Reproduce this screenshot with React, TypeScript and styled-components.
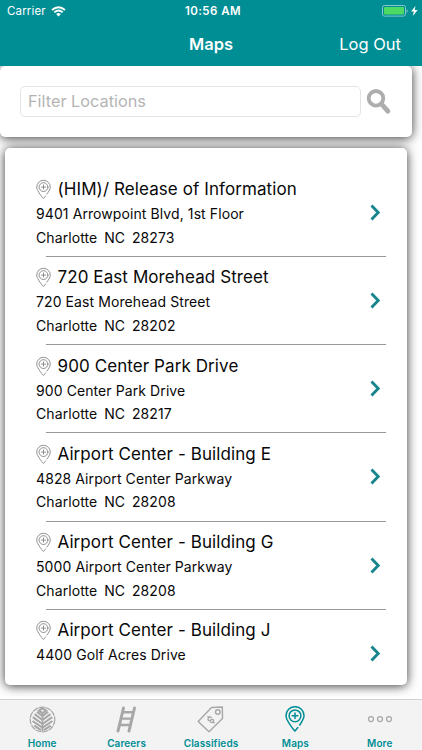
import React from "react";
import styled, { createGlobalStyle } from "styled-components";

const TEAL = "#008e95";
const GREY = "#a7a7a7";

const GlobalStyle = createGlobalStyle`
  * { box-sizing: border-box; }
  body { margin: 0; background: #fff; font-family: Inter, "Liberation Sans", sans-serif; }
`;

const Screen = styled.div`
  width: 422px;
  height: 750px;
  display: flex;
  flex-direction: column;
  overflow: hidden;
  background: #fff;
`;

const Header = styled.header`
  height: 66px;
  flex: none;
  position: relative;
  z-index: 1;
  background: ${TEAL};
  color: #fff;
`;

const StatusBar = styled.div`
  height: 22px;
  display: grid;
  grid-template-columns: 1fr auto 1fr;
  align-items: center;
  padding: 0 4px 0 7px;
  font-size: 11.5px;
  line-height: 22px;
`;

const Carrier = styled.div`
  display: flex;
  align-items: center;
  gap: 5px;
  letter-spacing: 0.15px;
`;

const Clock = styled.div`
  margin-left: 1px;
  font-weight: 600;
  letter-spacing: 0.45px;
`;

const Power = styled.div`
  display: flex;
  justify-content: flex-end;
  align-items: center;
  gap: 3px;
`;

const NavBar = styled.div`
  height: 44px;
  display: grid;
  grid-template-columns: 1fr auto 1fr;
  align-items: center;
  padding: 0 21px;
`;

const NavTitle = styled.h1`
  grid-column: 2;
  margin: 0;
  font-size: 16.5px;
  font-weight: 600;
  line-height: 24px;
`;

const NavAction = styled.button`
  justify-self: end;
  border: 0;
  padding: 0;
  background: none;
  color: #fff;
  font: 400 16.5px/24px Inter, sans-serif;
`;

const Content = styled.main`
  flex: 1;
  min-height: 0;
  display: flex;
  flex-direction: column;
  gap: 11px;
`;

const Card = styled.section`
  background: #fff;
  border-radius: 5px;
  box-shadow: 0 1px 11px rgba(0, 0, 0, 0.8);
`;

const SearchCard = styled(Card)`
  width: 411.5px;
  height: 71px;
  flex: none;
  display: flex;
  align-items: center;
  gap: 5px;
  padding: 0 0 1px 20px;
`;

const SearchInput = styled.input`
  width: 341px;
  height: 31px;
  border: 1px solid #e4e4e4;
  border-radius: 5px;
  padding: 0 7px;
  background: #fff;
  font: 400 16.3px/22px Inter, sans-serif;
  outline: 0;
  &::placeholder { color: #b4b4b4; opacity: 1; }
`;

const ListCard = styled(Card)`
  width: 401.5px;
  height: 536.5px;
  flex: none;
  margin-left: 5px;
  padding: 20.8px 20.5px 0 31px;
  overflow: hidden;
`;

const Row = styled.article`
  height: 88.2px;
  display: flex;
  flex-direction: column;
`;

const RowBody = styled.div`
  height: 87.2px;
  display: flex;
  align-items: center;
  justify-content: space-between;
  padding-right: 5px;
`;

const Details = styled.div`
  height: 87.2px;
  padding-top: 8.4px;
  color: #080808;
  white-space: pre;
`;

const Name = styled.h2`
  margin: 0;
  height: 25px;
  display: flex;
  align-items: center;
  gap: 6.5px;
  font-size: 17px;
  font-weight: 400;
  line-height: 25px;
  letter-spacing: 0.09px;
`;

const Line = styled.p<{ $tight?: boolean }>`
  margin: 0;
  font-size: 14px;
  line-height: 23.6px;
  letter-spacing: 0.09px;
  word-spacing: ${(p) => (p.$tight ? "-0.6px" : "0")};
`;

const Divider = styled.div`
  height: 1px;
  margin-left: 10px;
  background: #999;
`;

const TabBar = styled.nav`
  height: 51px;
  flex: none;
  position: relative;
  display: grid;
  grid-template-columns: repeat(5, 1fr);
  background: #f3f3f3;
  border-top: 1px solid #d2d2d2;
`;

const Tab = styled.a`
  display: flex;
  flex-direction: column;
  align-items: center;
  color: ${TEAL};
  font-size: 10px;
  font-weight: 600;
  line-height: 14px;
  letter-spacing: 0.1px;
`;

const TabIcon = styled.div<{ $active?: boolean }>`
  height: 36px;
  display: flex;
  align-items: center;
  padding-top: 2px;
  color: ${(p) => (p.$active ? TEAL : GREY)};
`;

const WifiIcon = () => (
  <svg width="15" height="11" viewBox="0 0 15 11" fill="none" stroke="#fff" strokeWidth="1.9">
    <path d="M1 4Q7.5-1.6 14 4M3.3 6.4Q7.5 2.8 11.7 6.4" />
    <path d="M5.1 8Q7.5 6 9.9 8L7.5 10.4Z" fill="#fff" stroke="none" />
  </svg>
);

const BatteryIcon = () => (
  <svg width="26" height="12" viewBox="0 0 26 12">
    <rect x=".5" y=".5" width="23" height="10.6" rx="2" fill="none" stroke="#83c8cc" />
    <rect x="2" y="2" width="20" height="7.6" rx="1" fill="#4cd964" />
    <path d="M24.7 4v4q1-.6 1-2t-1-2" fill="#83c8cc" />
  </svg>
);

const BoltIcon = () => (
  <svg width="7" height="10" viewBox="0 0 7 10">
    <path d="M4.5 0L0 5.6h2.8L1.8 10 6.7 4H3.8Z" fill="#fff" />
  </svg>
);

const SearchIcon = () => (
  <svg width="25" height="27" viewBox="0 0 25 27" fill="none" stroke="#adadad">
    <circle cx="10" cy="10.3" r="7.3" strokeWidth="3.8" />
    <path d="M15.5 16L21.8 23.2" strokeWidth="4.8" strokeLinecap="round" />
  </svg>
);

const PinIcon = ({ width, height, weight }: { width: number; height: number; weight: number }) => (
  <svg width={width} height={height} viewBox="0 0 20 26" fill="none" stroke="currentColor" strokeWidth={weight} strokeLinecap="round" strokeLinejoin="round">
    <path d="M12.8 21.6L10 25Q8.5 24.2 3.7 16.7C1.7 13.6 1 12 1 9.7A9 9 0 0 1 19 9.7C19 12.7 17.2 15.2 14.7 19" />
    <circle cx="10" cy="9.8" r="5.9" />
    <path d="M10 7v5.6M7.2 9.8h5.6" />
  </svg>
);

const RowPin = styled.span`
  display: flex;
  width: 15px;
  color: #858585;
`;

const ChevronIcon = () => (
  <svg width="11" height="17" viewBox="0 0 11 17" fill="none" stroke="#16858d" strokeWidth="2.9">
    <path d="M1.5 1.6L8.2 8.5L1.5 15.4" />
  </svg>
);

const TreeIcon = () => (
  <svg width="27" height="27" viewBox="0 0 27 27" fill="none" stroke="currentColor">
    <circle cx="13.5" cy="13.5" r="12.3" strokeWidth="1.2" strokeDasharray="6 .7" />
    <path d="M13.5 7v18.5" strokeWidth="1.7" />
    <path d="M10 4.6L13.5 2.2L17 4.6L13.5 7ZM13.5 10L8 5.8M13.5 10L19 5.8M13.5 14L5.6 8.2M13.5 14L21.4 8.2M13.5 18L3.8 11.2M13.5 18L23.2 11.2M13.5 21.7L3.5 15M13.5 21.7L23.5 15M12 24.2L5.3 19.6M15 24.2L21.7 19.6" strokeWidth="2.1" />
  </svg>
);

const LadderIcon = () => (
  <svg width="21" height="27" viewBox="0 0 21 27" fill="none" stroke="currentColor" strokeLinecap="round">
    <path d="M7.5 2L2 25M18.5 2L13 25" strokeWidth="3" />
    <path d="M6.8 6.2H17M5.5 12.6H15.5M4 19H14" strokeWidth="2.4" />
  </svg>
);

const TagIcon = () => (
  <svg width="27" height="27" viewBox="0 0 27 27" fill="none" stroke="currentColor" strokeWidth="1.4" strokeLinejoin="round" strokeLinecap="round">
    <path d="M1.2 15.5L14.5 1.5L25.3 1L25.5 12.5L12 25.8Z" />
    <circle cx="20.8" cy="6" r="2.3" />
    <path d="M11.4 11.9C10.2 13.9 12 15.4 13.7 14.1C15.5 12.7 17.2 13.7 16.4 15.5C15.8 16.8 14.4 16.8 13.3 16M11.4 11.9C12.1 10.8 13.3 10.8 14.3 11.5M11 10.6l.6 1M16.2 15.9l1 .9" />
  </svg>
);

const MoreIcon = () => (
  <svg width="26" height="8" viewBox="0 0 26 8" fill="none" stroke="currentColor" strokeWidth="1.25">
    <circle cx="4" cy="4" r="2.5" />
    <circle cx="13" cy="4" r="2.5" />
    <circle cx="22" cy="4" r="2.5" />
  </svg>
);

const locations = [
  { name: "(HIM)/ Release of Information", street: "9401 Arrowpoint Blvd, 1st Floor", city: "Charlotte  NC  28273" },
  { name: "720 East Morehead Street", street: "720 East Morehead Street", city: "Charlotte  NC  28202" },
  { name: "900 Center Park Drive", street: "900 Center Park Drive", city: "Charlotte  NC  28217" },
  { name: "Airport Center - Building E", street: "4828 Airport Center Parkway", city: "Charlotte  NC  28208" },
  { name: "Airport Center - Building G", street: "5000 Airport Center Parkway", city: "Charlotte  NC  28208" },
  { name: "Airport Center - Building J", street: "4400 Golf Acres Drive", city: "" },
];

const tabs = [
  { label: "Home", icon: <TreeIcon /> },
  { label: "Careers", icon: <LadderIcon /> },
  { label: "Classifieds", icon: <TagIcon /> },
  { label: "Maps", icon: <PinIcon width={20} height={26} weight={1.5} />, active: true },
  { label: "More", icon: <MoreIcon /> },
];

export default function App() {
  return (
    <Screen>
      <GlobalStyle />
      <Header>
        <StatusBar>
          <Carrier>Carrier <WifiIcon /></Carrier>
          <Clock>10:56 AM</Clock>
          <Power><BatteryIcon /><BoltIcon /></Power>
        </StatusBar>
        <NavBar>
          <NavTitle>Maps</NavTitle>
          <NavAction>Log Out</NavAction>
        </NavBar>
      </Header>
      <Content>
        <SearchCard>
          <SearchInput placeholder="Filter Locations" />
          <SearchIcon />
        </SearchCard>
        <ListCard>
          {locations.map((l, i) => (
            <Row key={l.name}>
              <RowBody>
                <Details>
                  <Name><RowPin><PinIcon width={15} height={21} weight={1.2} /></RowPin>{l.name}</Name>
                  <Line>{l.street}</Line>
                  {l.city && <Line $tight>{l.city}</Line>}
                </Details>
                <ChevronIcon />
              </RowBody>
              {i < locations.length - 1 && <Divider />}
            </Row>
          ))}
        </ListCard>
      </Content>
      <TabBar>
        {tabs.map((t) => (
          <Tab key={t.label}>
            <TabIcon $active={t.active}>{t.icon}</TabIcon>
            {t.label}
          </Tab>
        ))}
      </TabBar>
    </Screen>
  );
}
